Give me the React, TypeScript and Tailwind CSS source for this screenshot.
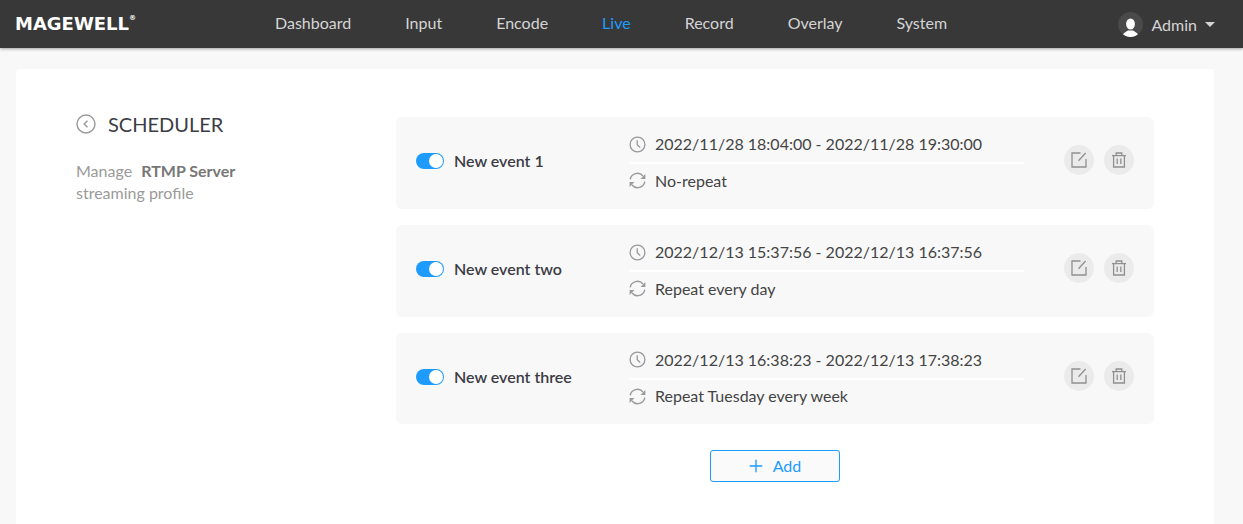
import { Plus } from "lucide-react";

const navItems = ["Dashboard", "Input", "Encode", "Live", "Record", "Overlay", "System"];

const events = [
  { name: "New event 1", time: "2022/11/28 18:04:00 - 2022/11/28 19:30:00", repeat: "No-repeat" },
  { name: "New event two", time: "2022/12/13 15:37:56 - 2022/12/13 16:37:56", repeat: "Repeat every day" },
  { name: "New event three", time: "2022/12/13 16:38:23 - 2022/12/13 17:38:23", repeat: "Repeat Tuesday every week" },
];

function ClockIcon() {
  return (
    <svg width="17" height="17" viewBox="0 0 17 17" fill="none" stroke="#999999" strokeWidth="1.3" className="shrink-0">
      <circle cx="8.5" cy="8.5" r="7.4" />
      <path d="M8.2 4.2V8.8L11.2 11.4" />
    </svg>
  );
}

function RepeatIcon() {
  return (
    <svg width="17" height="17" viewBox="0 0 17 17" fill="none" stroke="#999999" strokeWidth="1.4" className="shrink-0">
      <path d="M1.2 7.4A7.3 7.3 0 0 1 14 4" />
      <path d="M15.8 9.6A7.3 7.3 0 0 1 3 13" />
      <path d="M16.4 2V7H11.6Z" fill="#999999" stroke="none" />
      <path d="M0.6 15V10H5.4Z" fill="#999999" stroke="none" />
    </svg>
  );
}

function EditIcon() {
  return (
    <svg width="16" height="16" viewBox="0 0 16 16" fill="none" stroke="#909090" strokeWidth="1.3">
      <path d="M9.5 1H1V15H15V7" />
      <path d="M7.5 8.8L14.6 1" />
    </svg>
  );
}

function TrashIcon() {
  return (
    <svg width="16" height="16" viewBox="0 0 16 16" fill="none" stroke="#909090" strokeWidth="1.3">
      <path d="M1 3.6H15" />
      <path d="M5.2 3.4V1H10.8V3.4" />
      <path d="M2.6 3.6V15H13.4V3.6" />
      <path d="M6.2 6.5V12M9.8 6.5V12" />
    </svg>
  );
}

function EventRow({ name, time, repeat }: { name: string; time: string; repeat: string }) {
  return (
    <div className="flex h-[92px] items-center rounded-[6px] bg-[#f8f8f8] pb-[6px] pl-5 pr-5 last:h-[91px]">
      <div className="mt-[2px] flex h-4 w-[28px] shrink-0 items-center justify-end rounded-full bg-[#1e9bff] pr-px">
        <div className="h-[14px] w-[14px] rounded-full bg-white" />
      </div>
      <div className="mt-[2px] ml-[10px] w-[175px] text-base font-semibold text-[#3c3c46]">{name}</div>
      <div className="w-[395px] text-base text-[#444444]">
        <div className="flex h-[43px] items-center gap-[9px] border-b-2 border-white pt-[5px]">
          <ClockIcon />
          <span>{time}</span>
        </div>
        <div className="flex h-[35px] items-center gap-[9px] pb-[2px]">
          <RepeatIcon />
          <span>{repeat}</span>
        </div>
      </div>
      <div className="ml-auto flex gap-[10px]">
        <div className="flex h-[30px] w-[30px] items-center justify-center rounded-full bg-[#ebebeb]">
          <EditIcon />
        </div>
        <div className="flex h-[30px] w-[30px] items-center justify-center rounded-full bg-[#ebebeb]">
          <TrashIcon />
        </div>
      </div>
    </div>
  );
}

export default function App() {
  return (
    <div className="h-screen overflow-hidden bg-[#f8f8f8] font-['Lato',sans-serif]">
      {/* Top bar */}
      <header className="flex h-[48px] items-center bg-[#383838] pl-[15px] pr-[28px] shadow-[0_1px_3px_rgba(0,0,0,0.35)]">
        <div className="flex w-[260px] items-start font-['DejaVu_Sans',sans-serif] text-[18px] leading-none font-bold text-white">
          <span>MAGEWELL</span>
          <span className="text-[7px]">®</span>
        </div>
        <nav className="-mt-[2px] flex gap-[54px] text-base text-[#d4d4d4]">
          {navItems.map((item) => (
            <span key={item} className={item === "Live" ? "text-[#1e9bff]" : ""}>
              {item}
            </span>
          ))}
        </nav>
        <div className="ml-auto flex items-center text-base text-[#d4d4d4]">
          <div className="flex h-[25px] w-[25px] items-end justify-center overflow-hidden rounded-full bg-[#4a4a4a]">
            <svg width="17" height="19" viewBox="0 0 17 19" fill="white">
              <ellipse cx="8.5" cy="6" rx="4.4" ry="5.6" />
              <path d="M0.5 19C0.5 15 4 14 6 12.5H11C13 14 16.5 15 16.5 19Z" />
            </svg>
          </div>
          <span className="mt-[2px] ml-[8px]">Admin</span>
          <div className="ml-2 h-0 w-0 border-x-[5px] border-t-[5px] border-x-transparent border-t-[#d4d4d4]" />
        </div>
      </header>

      {/* Scheduler card */}
      <main className="ml-4 mt-[21px] flex h-[600px] w-[1198px] rounded-[4px] bg-white pl-[60px] pt-[48px]">
        <aside className="w-[320px] shrink-0">
          <div className="-mt-[3px] flex items-center gap-[12px]">
            <svg width="20" height="20" viewBox="0 0 20 20" fill="none" stroke="#999999" strokeWidth="1.4">
              <circle cx="10" cy="10" r="9" />
              <path d="M11.5 6.8L8.2 10L11.5 13.2" />
            </svg>
            <h1 className="text-[20px] leading-[20px] text-[#3c3c46]">SCHEDULER</h1>
          </div>
          <p className="mt-[26px] text-base leading-[22px] text-[#9a9a9a]">
            Manage <span className="ml-[5px] font-bold text-[#777777]">RTMP Server</span>
            <br />
            streaming profile
          </p>
        </aside>
        <section className="w-[758px]">
          <div className="flex flex-col gap-4">
            {events.map((event) => (
              <EventRow key={event.name} {...event} />
            ))}
          </div>
          <div className="mt-[26px] flex justify-center">
            <button className="flex h-8 w-[130px] items-center justify-center gap-[7px] rounded-[3px] border border-[#1e9bff] bg-[#fafafa] pr-[3px] text-base text-[#1e9bff]">
              <Plus size={20} strokeWidth={1.6} />
              <span>Add</span>
            </button>
          </div>
        </section>
      </main>
    </div>
  );
}
